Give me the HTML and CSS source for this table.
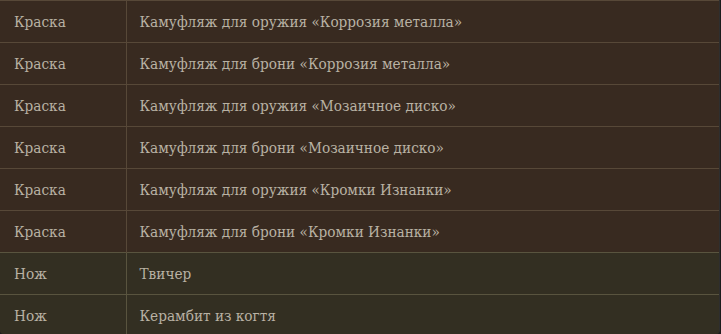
FILE: index.html
```html
<!DOCTYPE html>
<html lang="ru">
<head>
<meta charset="utf-8">
<link rel="stylesheet" href="styles.css">
</head>
<body>
<div class="wrap">
<table class="items">
<tbody>
<tr class="paint"><td class="type">Краска</td><td class="name">Камуфляж для оружия «Коррозия металла»</td></tr>
<tr class="paint"><td class="type">Краска</td><td class="name">Камуфляж для брони «Коррозия металла»</td></tr>
<tr class="paint"><td class="type">Краска</td><td class="name">Камуфляж для оружия «Мозаичное диско»</td></tr>
<tr class="paint"><td class="type">Краска</td><td class="name">Камуфляж для брони «Мозаичное диско»</td></tr>
<tr class="paint"><td class="type">Краска</td><td class="name">Камуфляж для оружия «Кромки Изнанки»</td></tr>
<tr class="paint"><td class="type">Краска</td><td class="name">Камуфляж для брони «Кромки Изнанки»</td></tr>
<tr class="knife"><td class="type">Нож</td><td class="name">Твичер</td></tr>
<tr class="knife"><td class="type">Нож</td><td class="name">Керамбит из когтя</td></tr>
</tbody>
</table>
</div>
</body>
</html>
```
FILE: styles.css
```css
html, body {
  margin: 0;
  padding: 0;
  background: #1c1c1c;
  height: 100%;
  overflow: hidden;
}
.wrap {
  width: 719px;
  height: 334px;
  border-right: 1px solid #2e2e2e;
  border-radius: 0 0 4px 4px;
  overflow: hidden;
  background: #332f22;
}
.items {
  width: 100%;
  border-collapse: collapse;
  font-family: "DejaVu Serif Condensed", "DejaVu Serif", serif;
  font-size: 15.2px;
  color: #b9b2a4;
}
.items td {
  box-sizing: border-box;
  height: 42px;
  padding: 1px 13px 0;
  border-top: 1px solid #574838;
  vertical-align: middle;
  white-space: nowrap;
}
.items td.type {
  width: 126px;
  padding-left: 14px;
  border-right: 1px solid #574838;
}
.items tr.paint td {
  background: #382a20;
}
.items tr.knife td {
  background: #332f22;
  border-top-color: #59543f;
}
.items tr.knife td.type {
  border-right-color: #59543f;
}
```
